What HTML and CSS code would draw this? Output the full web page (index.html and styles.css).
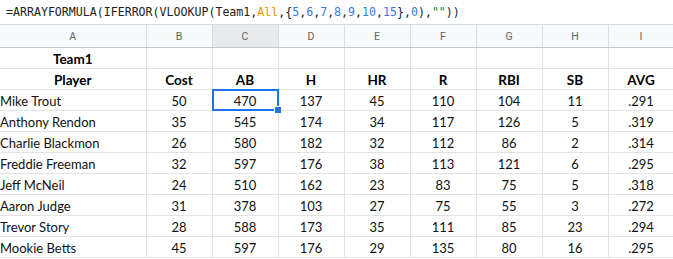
FILE: index.html
```html
<!DOCTYPE html>
<html lang="en">

<head>
    <meta charset="UTF-8">
    <meta name="viewport" content="width=device-width, initial-scale=1.0">
    <title>Team1 lookup</title>
    <link rel="stylesheet" href="styles.css">
</head>

<body>

    <div class="formula_bar">
        <span>=ARRAYFORMULA(IFERROR(VLOOKUP(Team1,</span><span class="f_range">All</span><span>,{</span><span class="f_num">5</span>,<span class="f_num">6</span>,<span class="f_num">7</span>,<span class="f_num">8</span>,<span class="f_num">9</span>,<span class="f_num">10</span>,<span class="f_num">15</span><span>},</span><span class="f_num">0</span><span>),</span><span class="f_str">""</span><span>))</span>
    </div>

    <table class="sheet">
        <colgroup>
            <col class="col_wide">
            <col><col><col><col><col><col><col><col>
        </colgroup>
        <thead>
            <tr class="col_head">
                <th>A</th>
                <th>B</th>
                <th class="active">C</th>
                <th>D</th>
                <th>E</th>
                <th>F</th>
                <th>G</th>
                <th>H</th>
                <th>I</th>
            </tr>
        </thead>
        <tbody>
            <tr class="bold_row">
                <td>Team1</td>
                <td></td><td></td><td></td><td></td><td></td><td></td><td></td><td></td>
            </tr>
            <tr class="bold_row">
                <td>Player</td>
                <td>Cost</td>
                <td>AB</td>
                <td>H</td>
                <td>HR</td>
                <td>R</td>
                <td>RBI</td>
                <td>SB</td>
                <td>AVG</td>
            </tr>
            <tr>
                <td class="name">Mike Trout</td>
                <td>50</td>
                <td class="selected">470</td>
                <td>137</td>
                <td>45</td>
                <td>110</td>
                <td>104</td>
                <td>11</td>
                <td>.291</td>
            </tr>
            <tr>
                <td class="name">Anthony Rendon</td>
                <td>35</td>
                <td>545</td>
                <td>174</td>
                <td>34</td>
                <td>117</td>
                <td>126</td>
                <td>5</td>
                <td>.319</td>
            </tr>
            <tr>
                <td class="name">Charlie Blackmon</td>
                <td>26</td>
                <td>580</td>
                <td>182</td>
                <td>32</td>
                <td>112</td>
                <td>86</td>
                <td>2</td>
                <td>.314</td>
            </tr>
            <tr>
                <td class="name">Freddie Freeman</td>
                <td>32</td>
                <td>597</td>
                <td>176</td>
                <td>38</td>
                <td>113</td>
                <td>121</td>
                <td>6</td>
                <td>.295</td>
            </tr>
            <tr>
                <td class="name">Jeff McNeil</td>
                <td>24</td>
                <td>510</td>
                <td>162</td>
                <td>23</td>
                <td>83</td>
                <td>75</td>
                <td>5</td>
                <td>.318</td>
            </tr>
            <tr>
                <td class="name">Aaron Judge</td>
                <td>31</td>
                <td>378</td>
                <td>103</td>
                <td>27</td>
                <td>75</td>
                <td>55</td>
                <td>3</td>
                <td>.272</td>
            </tr>
            <tr>
                <td class="name">Trevor Story</td>
                <td>28</td>
                <td>588</td>
                <td>173</td>
                <td>35</td>
                <td>111</td>
                <td>85</td>
                <td>23</td>
                <td>.294</td>
            </tr>
            <tr>
                <td class="name">Mookie Betts</td>
                <td>45</td>
                <td>597</td>
                <td>176</td>
                <td>29</td>
                <td>135</td>
                <td>80</td>
                <td>16</td>
                <td>.295</td>
            </tr>
        </tbody>
    </table>

</body>

</html>
```

FILE: styles.css
```css
body {
    margin: 0;
    padding: 0;
    background-color: #ffffff;
    overflow: hidden;
    font-family: Lato, Arial, sans-serif;
}

.formula_bar {
    height: 24px;
    border-bottom: 1px solid #dadce0;
    padding-left: 6px;
    display: flex;
    align-items: center;
    font-family: "DejaVu Sans Mono", monospace;
    font-size: 11.6px;
    color: #222;
    white-space: pre;
}

.f_range {
    color: #f09300;
}

.f_num {
    color: #3c78d8;
}

.f_str {
    color: #0b8043;
}

.sheet {
    border-collapse: collapse;
    table-layout: fixed;
    width: 674px;
}

.sheet col {
    width: 66px;
}

.sheet col.col_wide {
    width: 146px;
}

.col_head th {
    height: 22px;
    padding: 0;
    background-color: #f8f9fa;
    border-right: 1px solid #dadce0;
    border-bottom: 1px solid #c4c7c5;
    font-family: Roboto, Arial, sans-serif;
    font-weight: normal;
    font-size: 10.5px;
    color: #5f6368;
    text-align: center;
}

.col_head th.active {
    background-color: #e8eaed;
}

.sheet td {
    height: 20px;
    padding: 0 2px;
    border-right: 1px solid #e2e3e3;
    border-bottom: 1px solid #e2e3e3;
    font-size: 13px;
    line-height: 18px;
    color: #111;
    text-align: center;
    vertical-align: bottom;
    white-space: nowrap;
    overflow: hidden;
}

.sheet td.name {
    text-align: left;
    padding-left: 0;
}

.bold_row td {
    font-weight: bold;
    font-size: 13.5px;
    color: #000;
}

/* active cell outline + fill handle */
.sheet td.selected {
    position: relative;
    overflow: visible;
}

.sheet td.selected::before {
    content: "";
    position: absolute;
    left: -1px;
    top: -1px;
    right: -1px;
    bottom: -1px;
    border: 2px solid #1a73e8;
}

.sheet td.selected::after {
    content: "";
    position: absolute;
    right: -4px;
    bottom: -4px;
    width: 6px;
    height: 6px;
    background-color: #1a73e8;
    border: 1px solid #fff;
}
```
